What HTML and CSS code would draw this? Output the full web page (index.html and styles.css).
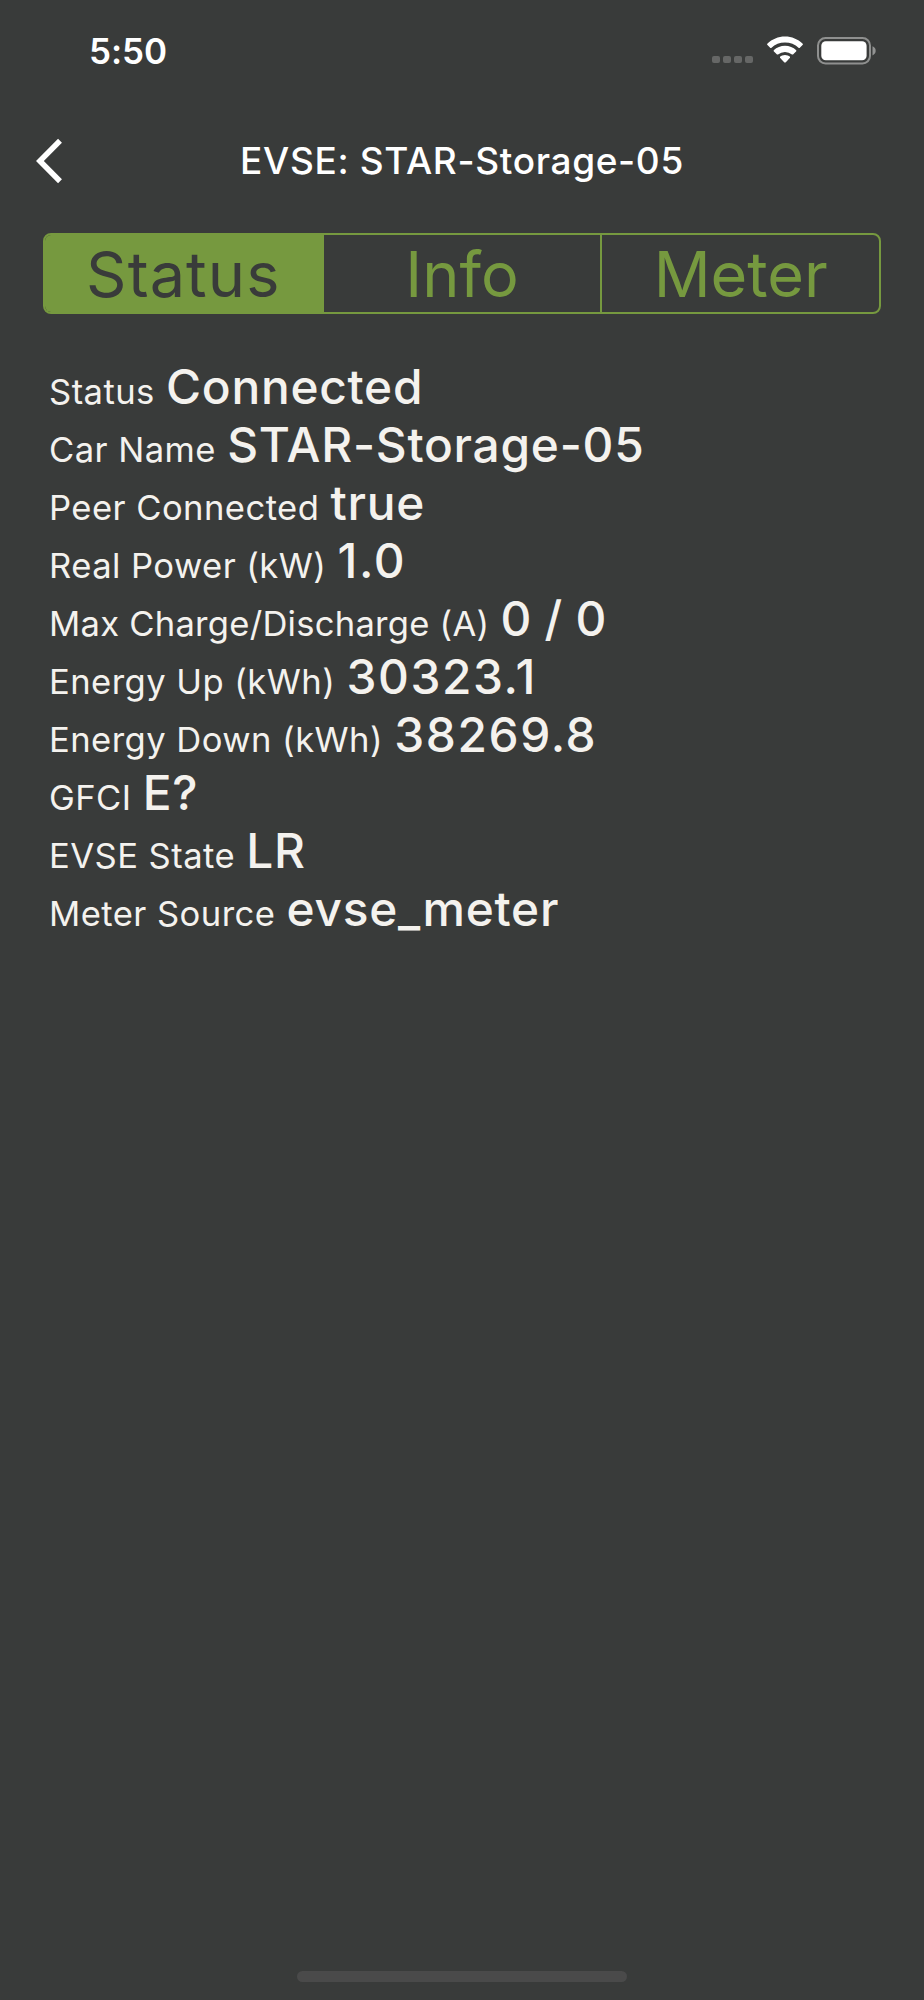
FILE: index.html
```
<!DOCTYPE html>
<html lang="en">
<head>
  <meta charset="UTF-8">
  <title>EVSE: STAR-Storage-05</title>
  <link rel="stylesheet" href="styles.css">
</head>
<body>
  <div class="statusbar">
    <span class="time">5:50</span>
    <div class="indicators">
      <div class="dots"><i></i><i></i><i></i><i></i></div>
      <svg class="wifi" width="36" height="28" viewBox="0 0 36 28" fill="#fff">
        <path d="M18 .5C24.8.5 31 3.200 35.500 7.500L36 8.500 32.600 11.900 31.800 11.900A20.300 20.300 0 0 0 4.200 11.900L3.400 11.900 0 8.500.5 7.500C5 3.200 11.200.5 18 .5Z"/>
        <path d="M18 9.700C22.300 9.700 26.200 11.400 29.300 14.200L29.300 15.300 26 18.500 25 18.500A11 11 0 0 0 11 18.500L10 18.500 6.700 15.300 6.700 14.200C9.800 11.400 13.700 9.700 18 9.700Z"/>
        <path d="M18 18.900C20 18.900 21.700 19.600 23 20.700L23 21.800 18.600 26.500 17.400 26.500 13 21.800 13 20.700C14.300 19.600 16 18.900 18 18.900Z"/>
      </svg>
      <svg class="battery" width="59" height="28" viewBox="0 0 59 28">
        <rect x="1" y="1" width="52" height="25.500" rx="7.500" fill="none" stroke="#8f908f" stroke-width="2"/>
        <rect x="4.300" y="4.300" width="45.300" height="19" rx="4.500" fill="#fff"/>
        <path d="M55.500 9.200C57.500 10 58.700 11.700 58.700 13.800S57.500 17.600 55.500 18.400Z" fill="#929392"/>
      </svg>
    </div>
  </div>

  <div class="navbar">
    <svg class="back" width="27" height="46" viewBox="0 0 27 46">
      <path d="M24 2.800 3.900 23 24 43.200" fill="none" stroke="#fff" stroke-width="5.500"/>
    </svg>
    <h1>EVSE: STAR-Storage-05</h1>
  </div>

  <div class="tabs">
    <div class="tab active">Status</div>
    <div class="tab">Info</div>
    <div class="tab">Meter</div>
  </div>

  <div class="details">
    <p>Status <b>Connected</b></p>
    <p>Car Name <b>STAR-Storage-05</b></p>
    <p>Peer Connected <b>true</b></p>
    <p>Real Power (kW) <b class="num">1.0</b></p>
    <p class="long">Max Charge/Discharge (A) <b>0 / 0</b></p>
    <p>Energy Up (kWh) <b class="num">30323.1</b></p>
    <p>Energy Down (kWh) <b class="num">38269.8</b></p>
    <p>GFCI <b>E?</b></p>
    <p>EVSE State <b>LR</b></p>
    <p>Meter Source <b>evse_meter</b></p>
  </div>

  <div class="home-bar"></div>
</body>
</html>
```
FILE: styles.css
```
* { box-sizing: border-box; }
body { margin: 0; height: 2000px; display: flex; flex-direction: column; background: #393b3a; color: #f4f2ee; font-family: Inter, "Liberation Sans", sans-serif; }

.statusbar { display: flex; justify-content: space-between; height: 100px; padding: 30px 48px 0 89px; color: #fff; }
.time { font-size: 35px; font-weight: 600; line-height: 42px; letter-spacing: -0.1px; }
.indicators { display: flex; align-items: flex-start; padding-top: 6px; }
.dots { display: flex; gap: 3px; padding-top: 20px; margin-right: 14px; }
.dots i { width: 8px; height: 7px; border-radius: 2px; background: #666766; }
.wifi { margin-right: 14px; }
.battery { margin-top: 1px; }

.navbar { display: flex; align-items: center; height: 122px; padding: 0 36px; color: #fff; }
.navbar h1 { flex: 1; margin: 0 27px 0 0; font-size: 37px; font-weight: 500; line-height: 46px; letter-spacing: 0.65px; text-align: center; }

.tabs { display: flex; height: 81px; margin: 11px 43px 0; border: 2px solid #76993f; border-radius: 8px; overflow: hidden; }
.tab { flex: 1; border-left: 2px solid #76993f; color: #76993f; font-size: 63px; line-height: 79px; text-align: center; }
.tab:first-child { border-left: 0; }
.tab.active { background: #76993f; color: #393b3a; letter-spacing: 1.100px; }

.details { padding: 44px 49px 0; }
.details p { margin: 0; height: 58px; font-size: 34.600px; line-height: 58px; letter-spacing: 0.45px; white-space: nowrap; }
.details p.long { letter-spacing: 0.25px; }
.details b { margin-left: 1px; font-size: 47.800px; font-weight: 540; letter-spacing: 0.75px; word-spacing: -1px; }
.details b.num { letter-spacing: 1.600px; }

.home-bar { width: 330px; height: 11px; margin: auto auto 18px; border-radius: 6px; background: #4a4a4a; }
```
